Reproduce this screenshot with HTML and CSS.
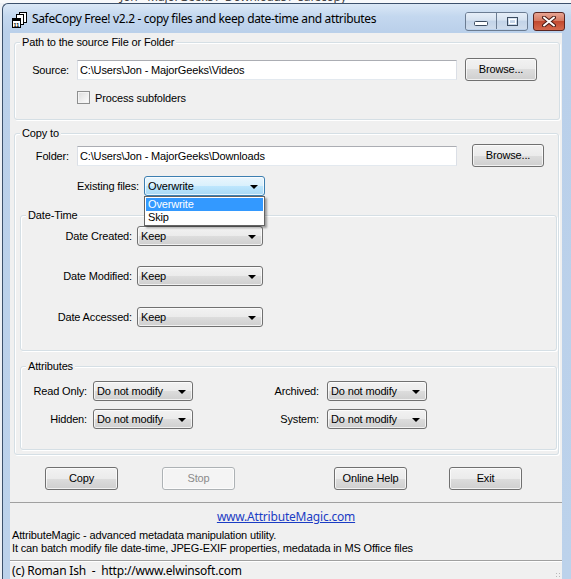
FILE: index.html
```html
<!DOCTYPE html>
<html>
<head>
<meta charset="utf-8">
<title>SafeCopy Free! v2.2</title>
<link rel="stylesheet" href="styles.css">
</head>
<body>
<div class="screen">
  <div class="behind"><span class="crumbs">Jon - MajorGeeks &#9656; Downloads &#9656; safecopy</span></div>
  <div class="window">
    <div class="titlebar">
      <svg class="app-icon" width="16" height="16" viewBox="0 0 16 16">
        <rect x="7.5" y="0.5" width="7" height="10" fill="#fff" stroke="#000"/>
        <rect x="4.5" y="2.5" width="7" height="10" fill="#fff" stroke="#000"/>
        <rect x="0.5" y="6.5" width="8" height="9" fill="#fff" stroke="#000"/>
        <rect x="1" y="7" width="7" height="2" fill="#000"/>
        <text x="1.6" y="14.6" font-family="Liberation Sans, sans-serif" font-size="5.5" font-weight="bold" fill="#000">11</text>
      </svg>
      <span class="title">SafeCopy Free! v2.2 - copy files and keep date-time and attributes</span>
      <div class="caption">
        <div class="cap-group">
          <div class="cap cap-min">
            <svg width="14" height="6" viewBox="0 0 14 6"><rect x="0.5" y="0.5" width="13" height="4" rx="1" fill="#fff" stroke="#3c4c60"/></svg>
          </div>
          <div class="cap cap-max">
            <svg width="11" height="9" viewBox="0 0 11 9"><rect x="0.5" y="0.5" width="10" height="8" fill="none" stroke="#3c4c60"/><rect x="2.5" y="2.5" width="6" height="4" fill="none" stroke="#fff"/></svg>
          </div>
        </div>
        <div class="cap cap-close">
          <svg width="14" height="11" viewBox="0 0 14 11"><path d="M2 1.5 L12 9.5 M12 1.5 L2 9.5" stroke="#4b1d17" stroke-width="4" stroke-linecap="round"/><path d="M2 1.5 L12 9.5 M12 1.5 L2 9.5" stroke="#fff" stroke-width="2" stroke-linecap="round"/></svg>
        </div>
      </div>
    </div>

    <div class="client">
      <div class="group group-source">
        <div class="group-title">Path to the source File or Folder</div>
        <div class="row path-row">
          <span class="lbl lbl-path">Source:</span>
          <div class="textbox">C:\Users\Jon - MajorGeeks\Videos</div>
          <div class="btn browse">Browse...</div>
        </div>
        <div class="row check-row">
          <span class="checkbox"></span>
          <span>Process subfolders</span>
        </div>
      </div>

      <div class="group group-copy">
        <div class="group-title">Copy to</div>
        <div class="row path-row">
          <span class="lbl lbl-path">Folder:</span>
          <div class="textbox">C:\Users\Jon - MajorGeeks\Downloads</div>
          <div class="btn browse browse-wide">Browse...</div>
        </div>
        <div class="row existing-row">
          <span class="lbl lbl-existing">Existing files:</span>
          <div class="combo-wrap">
            <div class="combo combo-focus w-existing"><span>Overwrite</span><i class="arrow"></i></div>
            <ul class="droplist">
              <li class="selected">Overwrite</li>
              <li>Skip</li>
            </ul>
          </div>
        </div>

        <div class="group group-date">
          <div class="group-title">Date-Time</div>
          <div class="row date-row">
            <span class="lbl lbl-date">Date Created:</span>
            <div class="combo w-date"><span>Keep</span><i class="arrow"></i></div>
          </div>
          <div class="row date-row">
            <span class="lbl lbl-date">Date Modified:</span>
            <div class="combo w-date"><span>Keep</span><i class="arrow"></i></div>
          </div>
          <div class="row date-row last">
            <span class="lbl lbl-date">Date Accessed:</span>
            <div class="combo w-date"><span>Keep</span><i class="arrow"></i></div>
          </div>
        </div>

        <div class="group group-attr">
          <div class="group-title">Attributes</div>
          <div class="attr-grid">
            <span class="lbl">Read Only:</span>
            <div class="combo"><span>Do not modify</span><i class="arrow"></i></div>
            <span class="lbl">Archived:</span>
            <div class="combo"><span>Do not modify</span><i class="arrow"></i></div>
            <span class="lbl">Hidden:</span>
            <div class="combo"><span>Do not modify</span><i class="arrow"></i></div>
            <span class="lbl">System:</span>
            <div class="combo"><span>Do not modify</span><i class="arrow"></i></div>
          </div>
        </div>
      </div>

      <div class="actions">
        <div class="btn action">Copy</div>
        <div class="btn action disabled">Stop</div>
        <div class="btn action">Online Help</div>
        <div class="btn action">Exit</div>
      </div>

      <div class="info">
        <a class="link" href="#">www.AttributeMagic.com</a>
        <p class="blurb">AttributeMagic - advanced metadata manipulation utility.<br>It can batch modify file date-time, JPEG-EXIF properties, medatada in MS Office files</p>
      </div>

      <div class="statusbar">
        <span>(c) Roman Ish&nbsp; -&nbsp; http://www.elwinsoft.com</span>
        <i class="grip"></i>
      </div>
    </div>
  </div>
</div>
</body>
</html>
```

FILE: styles.css
```css
html, body {
  margin: 0;
  padding: 0;
}

body {
  font-family: "Liberation Sans", Arial, sans-serif;
  font-size: 11px;
  letter-spacing: -0.15px;
  color: #000;
  background: #fff;
}

.screen {
  width: 571px;
  height: 579px;
  overflow: hidden;
  background: #eef1f5;
}

/* strip of the explorer window peeking out above */
.behind {
  height: 3px;
  overflow: hidden;
  background: #f8f9fb;
}

.crumbs {
  display: block;
  margin-top: -9px;
  padding-left: 120px;
  font-family: "Noto Sans", sans-serif;
  font-size: 12px;
  line-height: 12px;
  color: #444;
  white-space: nowrap;
}

/* ---------- window frame ---------- */
.window {
  margin-left: 2px;
  height: 576px;
  box-sizing: border-box;
  border-top: 1px solid #3c516c;
  border-left: 1px solid #3c516c;
  border-top-left-radius: 6px;
  padding: 0 9px 0 7px;
  background: linear-gradient(to bottom, #dbe8f6 0, #c4d8ef 12px, #bad0ea 28px, #bcd2eb 100%);
  display: flex;
  flex-direction: column;
}

.titlebar {
  height: 29px;
  flex: none;
  display: flex;
  align-items: flex-start;
}

.app-icon {
  margin: 8px 0 0 2px;
  flex: none;
}

.title {
  margin: 7px 0 0 4px;
  font-family: "Noto Sans", "Open Sans", sans-serif;
  font-size: 12px;
  line-height: 16px;
  letter-spacing: -0.35px;
  color: #000;
  white-space: nowrap;
}

.caption {
  margin: 8px -3px 0 auto;
  display: flex;
  gap: 5px;
}

.cap-group {
  display: flex;
  border: 1px solid #6b7c92;
  border-radius: 3px;
  overflow: hidden;
}

.cap {
  display: flex;
  align-items: center;
  justify-content: center;
  height: 16px;
  width: 30px;
  background: linear-gradient(to bottom, #e6eef8 0, #d6e2f0 45%, #c2d3e8 50%, #cfdcec 100%);
}

.cap-min svg {
  margin-top: 6px;
}

.cap-max {
  border-left: 1px solid #6b7c92;
}

.cap-close {
  width: 30px;
  height: 17px;
  border: 1px solid #5a2520;
  border-radius: 3px;
  background: linear-gradient(to bottom, #e8a493 0, #d67b63 45%, #c24a30 50%, #d5694e 100%);
}

/* ---------- client area ---------- */
.client {
  flex: 1;
  background: #f0f0f0;
  display: flex;
  flex-direction: column;
}

.group {
  border: 1px solid #d5dfe5;
  border-radius: 3px;
  box-shadow: inset 1px 1px 0 #fff, 1px 1px 0 #fff;
}

.group-title {
  width: max-content;
  height: 13px;
  line-height: 13px;
  margin: -7px 0 0 5px;
  padding: 0 2px;
  background: #f0f0f0;
  white-space: nowrap;
}

.group-source {
  margin: 9px 2px 0 4px;
  padding-bottom: 15px;
}

.group-copy {
  margin: 13px 3px 0 4px;
  padding-bottom: 4px;
}

.group-date {
  margin: 19px 1px 0 5px;
  padding-bottom: 23px;
}

.group-attr {
  margin: 15px 1px 0 5px;
  padding-bottom: 20px;
}

.row {
  display: flex;
  align-items: center;
}

.lbl {
  flex: none;
  text-align: right;
  white-space: nowrap;
}

.path-row {
  height: 23px;
  margin-top: 9px;
}

.group-copy .path-row {
  margin-top: 4px;
}

.lbl-path {
  width: 54px;
  margin-right: 8px;
}

.textbox {
  width: 380px;
  height: 20px;
  box-sizing: border-box;
  padding: 0 2px;
  line-height: 18px;
  background: #fff;
  border: 1px solid #dbdfe6;
  border-top-color: #abadb3;
  border-bottom-color: #e3e9ef;
  white-space: nowrap;
}

.btn {
  box-sizing: border-box;
  height: 23px;
  line-height: 21px;
  text-align: center;
  border: 1px solid #707070;
  border-radius: 3px;
  background: linear-gradient(to bottom, #f2f2f2 0, #ebebeb 50%, #dddddd 50%, #cfcfcf 100%);
  box-shadow: inset 0 0 0 1px rgba(255, 255, 255, 0.7);
}

.browse {
  width: 72px;
  margin-left: 8px;
}

.browse-wide {
  margin-left: 15px;
}

.check-row {
  height: 13px;
  margin-top: 10px;
  padding-left: 62px;
  gap: 5px;
}

.checkbox {
  width: 13px;
  height: 13px;
  box-sizing: border-box;
  border: 1px solid #8e8f8f;
  background: linear-gradient(135deg, #dcdcdc 0, #f4f4f4 70%, #fff 100%);
  box-shadow: inset 0 0 0 1px #f4f4f4;
}

.existing-row {
  height: 20px;
  margin-top: 9px;
}

.lbl-existing {
  width: 124px;
  margin-right: 5px;
}

.combo-wrap {
  position: relative;
}

.combo {
  box-sizing: border-box;
  height: 20px;
  padding: 0 6px 0 3px;
  display: flex;
  align-items: center;
  justify-content: space-between;
  border: 1px solid #707070;
  border-radius: 3px;
  background: linear-gradient(to bottom, #f2f2f2 0, #ebebeb 50%, #dddddd 50%, #cfcfcf 100%);
  box-shadow: inset 0 0 0 1px rgba(255, 255, 255, 0.7);
  white-space: nowrap;
}

.combo-focus {
  border-color: #3c7fb1;
  background: linear-gradient(to bottom, #eaf6fd 0, #d9f0fc 50%, #bee6fd 50%, #a7d9f5 100%);
}

.arrow {
  width: 0;
  height: 0;
  margin-top: 2px;
  border-left: 4px solid transparent;
  border-right: 4px solid transparent;
  border-top: 4px solid #000;
}

.w-existing {
  width: 121px;
}

/* open list of the "Existing files" combo */
.droplist {
  position: absolute;
  top: 20px;
  left: 0;
  width: 121px;
  box-sizing: border-box;
  margin: 0;
  padding: 1px;
  list-style: none;
  background: #fff;
  border: 1px solid #646464;
  box-shadow: 2px 2px 2px rgba(0, 0, 0, 0.35);
}

.droplist li {
  height: 13px;
  line-height: 13px;
  padding-left: 2px;
}

.droplist .selected {
  background: #3399ff;
  color: #fff;
}

.date-row {
  height: 20px;
  margin-top: 20px;
}

.group-date .date-row:nth-of-type(2) {
  margin-top: 4px;
}

.date-row.last {
  margin-top: 21px;
}

.lbl-date {
  width: 111px;
  margin-right: 5px;
}

.w-date {
  width: 126px;
}

/* label | combo | label | combo */
.attr-grid {
  margin-top: 8px;
  display: grid;
  grid-template-columns: 66px 105px 127px 108px;
  grid-auto-rows: 20px;
  row-gap: 8px;
  align-items: center;
}

.attr-grid .combo {
  width: 100px;
  margin-left: 6px;
}

.attr-grid .combo:nth-child(4),
.attr-grid .combo:nth-child(8) {
  margin-left: 8px;
}

/* ---------- buttons ---------- */
.actions {
  display: flex;
  margin-top: 12px;
  padding-left: 35px;
}

.action {
  width: 73px;
}

.action:nth-child(2) {
  margin-left: 44px;
}

.action:nth-child(3) {
  margin-left: 99px;
}

.action:nth-child(4) {
  margin-left: 42px;
}

.disabled {
  color: #8b8b8b;
  border-color: #adb2b5;
  background: #f4f4f4;
}

/* ---------- info panel ---------- */
.info {
  margin-top: 12px;
  border-top: 1px solid #a0a0a0;
  padding-top: 7px;
  display: flex;
  flex-direction: column;
}

.link {
  align-self: center;
  font-family: "Noto Sans", "Open Sans", sans-serif;
  font-size: 12px;
  line-height: 14px;
  letter-spacing: -0.2px;
  color: #1a3cc4;
  text-decoration: underline;
}

.blurb {
  margin: 5px 0 0 2px;
  line-height: 13px;
}

.statusbar {
  margin-top: 5px;
  flex: 1;
  border-top: 1px solid #a0a0a0;
  box-shadow: inset 0 1px 0 #fff;
  padding: 2px 0 0 2px;
  display: flex;
  justify-content: space-between;
  font-family: "Noto Sans", "Open Sans", sans-serif;
  font-size: 12px;
  line-height: 16px;
  letter-spacing: -0.2px;
}

.grip {
  width: 6px;
  height: 6px;
  margin: 9px 1px 0 0;
  background:
    radial-gradient(circle, #b8b8b8 0.8px, transparent 1px) 0 0 / 3px 3px;
}
```
